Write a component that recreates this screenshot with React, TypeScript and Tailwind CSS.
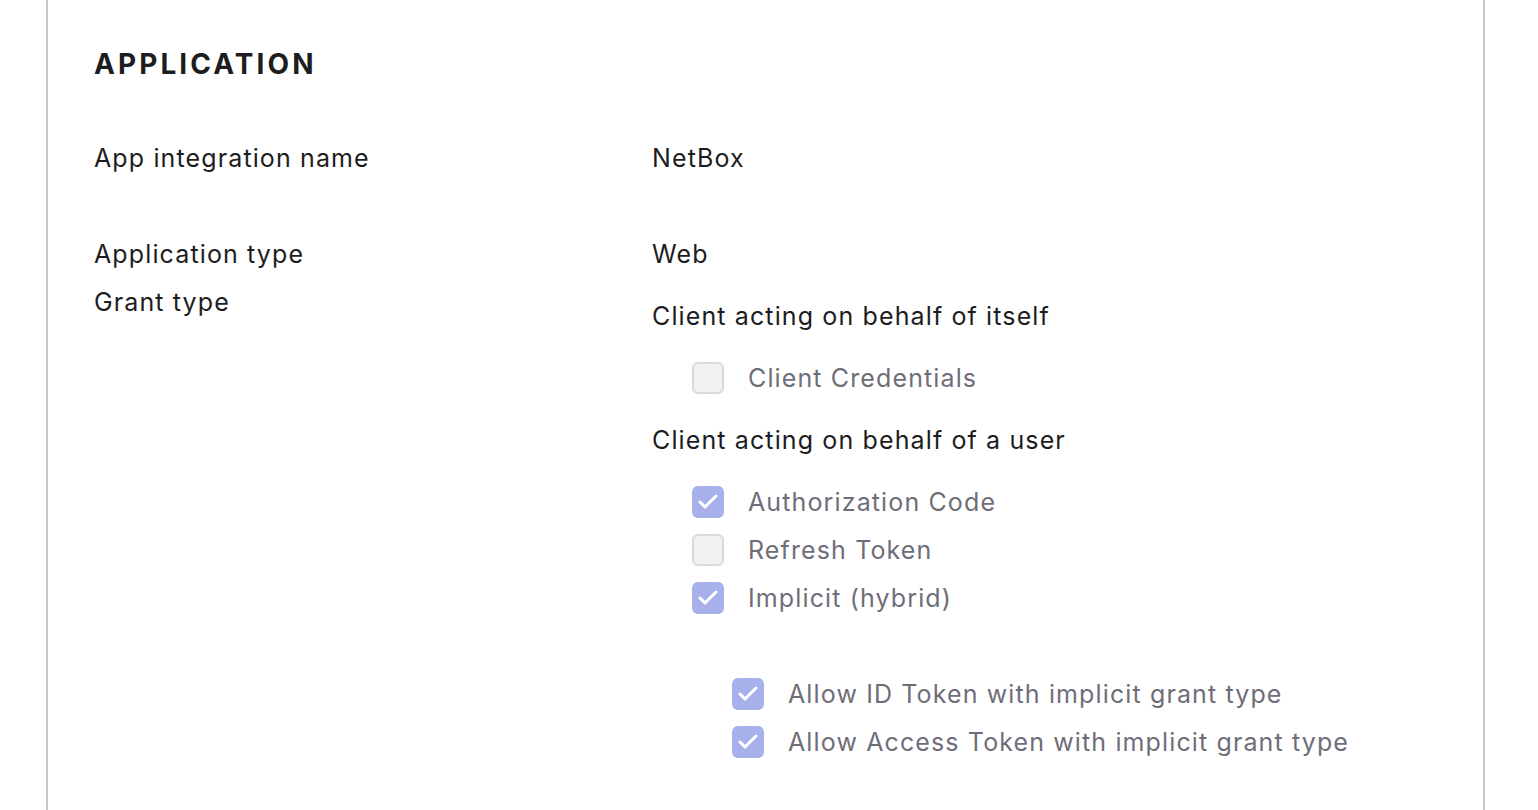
import { Check } from 'lucide-react';

type Box = { label: string; checked: boolean };

function CheckRow({ label, checked }: Box) {
    return (
        <div className="flex items-center h-12 gap-6">
            {checked ? (
                <span className="w-8 h-8 rounded-md bg-[#a7b0ea] flex items-center justify-center">
                    <Check className="w-6 h-6 text-white" strokeWidth={3} />
                </span>
            ) : (
                <span className="w-8 h-8 rounded-md bg-[#f1f1f3] border-2 border-[#d8d8dd]" />
            )}
            <span className="text-[#6e6e78]">{label}</span>
        </div>
    );
}

export default function App() {
    const userGrants: Box[] = [
        { label: 'Authorization Code', checked: true },
        { label: 'Refresh Token', checked: false },
        { label: 'Implicit (hybrid)', checked: true },
    ];
    const implicitOpts: Box[] = [
        { label: 'Allow ID Token with implicit grant type', checked: true },
        { label: 'Allow Access Token with implicit grant type', checked: true },
    ];

    return (
        <div className="min-h-[810px] bg-white font-['Inter','Liberation_Sans',sans-serif] text-[25px] tracking-[0.045em] text-[#1d1d21]">
            <div className="ml-[46px] w-[1439px] min-h-[810px] border-x-2 border-[#c5c5cc] pl-[46px] pt-[44px]">
                <h2 className="text-[28px] leading-10 font-bold tracking-[0.11em] text-[#1d1d21]">APPLICATION</h2>

                <div className="mt-[50px] grid grid-cols-[558px_1fr] leading-12">
                    <div>App integration name</div>
                    <div>NetBox</div>
                </div>

                <div className="mt-12 grid grid-cols-[558px_1fr] leading-12">
                    <div>Application type</div>
                    <div>Web</div>
                </div>

                <div className="grid grid-cols-[558px_1fr] leading-12">
                    <div>Grant type</div>
                    <div className="mt-[14px]">
                        <div>Client acting on behalf of itself</div>
                        <div className="pl-10 mt-[14px]">
                            <CheckRow label="Client Credentials" checked={false} />
                        </div>
                        <div className="mt-[14px]">Client acting on behalf of a user</div>
                        <div className="pl-10 mt-[14px]">
                            {userGrants.map(g => <CheckRow key={g.label} {...g} />)}
                            <div className="pl-10 mt-12">
                                {implicitOpts.map(g => <CheckRow key={g.label} {...g} />)}
                            </div>
                        </div>
                    </div>
                </div>
            </div>
        </div>
    );
}
